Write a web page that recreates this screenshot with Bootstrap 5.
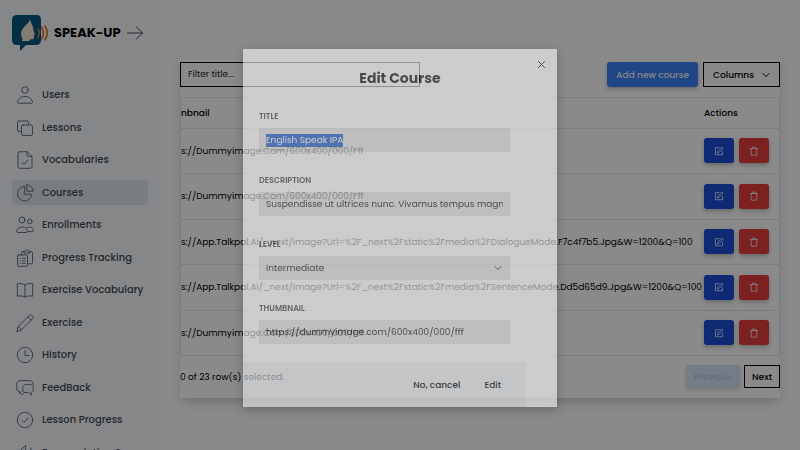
<!DOCTYPE html>
<html lang="en">
<head>
<meta charset="utf-8">
<meta name="viewport" content="width=device-width, initial-scale=1">
<title>Speak-Up – Courses</title>
<link href="https://cdn.jsdelivr.net/npm/bootstrap@5.3.0/dist/css/bootstrap.min.css" rel="stylesheet">
<style>
:root{--bs-body-font-family:Poppins,Inter,"Open Sans",sans-serif}
body{font-size:9px;line-height:16px;color:#000;background:#fff}
svg{flex:none}
.ico{fill:none;stroke:currentColor;stroke-linecap:round;stroke-linejoin:round}
.sidebar{width:160px;background:#f6f9fc;padding:12px}
.brand{height:42px;font-size:13px;font-weight:700;color:#000;gap:6px}
.brand-arrow{color:#4c5158}
.side-list{height:390px;margin-top:25px}
.side-link{height:25px;padding-left:4px;gap:8px;color:#454a52;font-size:10px;font-weight:500}
.side-link.active{background:#e0e6ef}
.side-link .ico{color:#6b727c}
.content-area{padding:50px 20px 0}
.panel{padding:12px 0 10px;box-shadow:0 6px 10px -2px rgba(0,0,0,.2)}
.tool{height:25px;border-radius:0;padding:0 9px;font-size:9px;line-height:16px;font-weight:500}
.tools{gap:5px}
.filter{width:240px;border:1px solid #000;padding:0 7px;font-weight:400}
.filter::placeholder{color:#222;opacity:1}
.btn-main{background:#3b82f6;border:0;border-radius:3px;color:#eff6ff;box-shadow:0 2px 4px rgba(0,0,0,.25)}
.btn-line{border:1px solid #000;color:#000;background:#fff}
.table-frame{margin-top:10px;border:1px solid #e2e8f0;overflow:hidden}
.course-table{height:257px;font-size:9px;white-space:nowrap}
.course-table th,.course-table td{padding:0;vertical-align:middle;border-color:#e2e8f0;color:#000}
.course-table th{height:30px;font-weight:500}
.course-table tr:last-child td{border-bottom:0}
.course-table .act{width:75px}
.row-actions{gap:5px}
.sq{width:30px;height:25px;border:0;border-radius:3px;color:#e8eefc;box-shadow:0 2px 4px rgba(0,0,0,.25)}
.sq-edit{background:#1d4ed8}
.sq-del{background:#e83c3c}
.panel-foot{margin-top:9px}
.pager{height:23px;padding:0 8px;font-size:9px;line-height:16px;font-weight:500;border-radius:0}
.pager.btn-line{padding:0 7px}
.pager:disabled{background:#dbe4fb;color:#b9c9ee;border:0;border-radius:2px;opacity:1;box-shadow:0 2px 4px rgba(0,0,0,.15)}
.modal-backdrop{--bs-backdrop-opacity:.46}
.edit-dialog{max-width:314px;margin:49px auto}
.edit-box{border:0;border-radius:0;opacity:.57;color:#1a1a1a;box-shadow:0 3px 10px rgba(0,0,0,.4)}
.edit-close{top:7px;right:8px;width:16px;height:16px;color:#222}
.edit-title{font-size:14px;line-height:20px;font-weight:700;padding-top:19px;color:#1c1c1c}
.edit-form{padding:23px 47px 18px 16px}
.field-label{font-size:8px;line-height:12px;font-weight:600;margin-bottom:5px;color:#4c4c4c;text-transform:uppercase}
.field{height:24px;border:0;border-radius:0;background-color:#e6e6e6;color:#1a1a1a;font-size:9px;line-height:16px;padding:0 7px;margin-bottom:23px}
.field:focus{background-color:#e6e6e6;box-shadow:none;color:#1a1a1a}
.field::selection{background:#2861d0;color:#fff}
select.field{background-position:right 8px center;background-size:8px 8px}
.field.final{margin-bottom:0}
.edit-foot{background:#f1f3f6;margin-right:31px;height:45px;padding-right:17px;gap:8px}
.edit-foot .btn{border:0;padding:0 8px;font-size:9px;line-height:16px;font-weight:500;color:#000}
</style>
</head>
<body>
<svg class="d-none" xmlns="http://www.w3.org/2000/svg">
<symbol id="i-user" viewBox="0 0 18 18"><circle cx="9" cy="4" r="3.3"/><path d="M2.2 17.2c-.9 0-.9-1-.7-1.8C2.500 12 5.500 10.500 9 10.500s6.500 1.500 7.400 4.900c.3.800.2 1.800-.7 1.800z"/></symbol>
<symbol id="i-copy" viewBox="0 0 18 18"><path d="M5 12.500H3A1.500 1.500 0 0 1 1.500 11V3.500A1.500 1.500 0 0 1 3 2h8a1.500 1.500 0 0 1 1.500 1.500v2"/><rect x="5.500" y="6" width="11" height="10.500" rx="1.500"/></symbol>
<symbol id="i-doc" viewBox="0 0 18 18"><path d="M3.500.7H11L16 5.500v10.300c0 .9-.6 1.500-1.500 1.500h-11C2.600 17.300 2 16.700 2 15.800V2.200C2 1.300 2.600.7 3.500.7zM11 .7v3.500c0 .8.500 1.300 1.300 1.300H16M6.200 11.500l2 2 3.600-4.500"/></symbol>
<symbol id="i-pie" viewBox="0 0 18 18"><path d="M8.500 2.500A7.200 7.200 0 1 0 15.700 11l-1-.8H8.500z"/><path d="M10.800.8v6.400h6.400A6.600 6.600 0 0 0 10.800.8z"/></symbol>
<symbol id="i-group" viewBox="0 0 18 18"><circle cx="6" cy="4" r="3"/><circle cx="13.800" cy="5.500" r="2.300"/><path d="M1.500 16.500c-.8 0-.9-.7-.8-1.500.5-2.700 2.600-4 5.300-4s4.800 1.300 5.300 4c.1.800 0 1.500-.8 1.500zM10.500 11.700c3-1.600 6.300-.4 6.900 2.700.1.700-.1 1.200-.8 1.200h-5"/></symbol>
<symbol id="i-clip" viewBox="0 0 18 18"><rect x="1.500" y="6" width="10" height="11.300" rx="1"/><path d="M5.500 6V3.500c0-.6.400-1 1-1h1.300M14 2.500h1.500c.6 0 1 .4 1 1v10.300c0 .6-.4 1-1 1h-4M7.800 3.700V2.200h1.700a1.500 1.500 0 0 1 2.900 0H14v1.500zM4 9.300h.4M6.300 9.300h3M4 11.800h.4M6.300 11.800h3M4 14.300h.4M6.300 14.300h3"/></symbol>
<symbol id="i-book" viewBox="0 0 18 18"><path d="M9 4C7 2.400 4 2.200 1.300 2.800v12.400C4 14.600 7 14.800 9 16.200c2-1.400 5-1.600 7.700-1V2.800C14 2.200 11 2.400 9 4zM9 4v12"/></symbol>
<symbol id="i-pen" viewBox="0 0 18 18"><path d="M.8 17.200l1.300-4.700L13.500 1.300c1.700-1.500 4.700 1.200 3.200 3.200L5.500 15.900zM12 2.800l3.200 3.200M2.300 12.500l3.200 3.200"/></symbol>
<symbol id="i-clock" viewBox="0 0 18 18"><circle cx="9" cy="9" r="7.700"/><path d="M9 4.500V9.500h4"/></symbol>
<symbol id="i-chat" viewBox="0 0 18 18"><path d="M5.500 12.700l-2 2.300v-2.600C.7 12.200.7 10.500.7 7.500c0-5 0-6 8.300-6s8.200 1 8.200 3.800"/><path d="M9.500 13.500C7 13.400 6.800 12.500 6.800 9.500c0-3.500.5-4 5.200-4s5.200.5 5.200 4c0 3-.2 3.700-2 4v2.800l-2.700-2.700zM8.700 13.500L5.500 16"/></symbol>
<symbol id="i-check" viewBox="0 0 18 18"><circle cx="9" cy="9" r="7.700"/><path d="M6 9.500l2 2L12 7"/></symbol>
<symbol id="i-sound" viewBox="0 0 18 18"><path d="M1.300 6.300h3.200l5-4.800v15l-5-4.800H1.300zM12 6.500q1.500 2.500 0 5M14.300 4q3.200 5 0 10"/></symbol>
<symbol id="i-edit" viewBox="0 0 12 12"><path d="M6 2H1.700v8.500h8.600V6.500M4.300 8l.5-2.200L9.500 1.200l1.400 1.400L6.400 7.400z"/></symbol>
<symbol id="i-trash" viewBox="0 0 12 12"><path d="M1.700 3h8.600M4.200 3V1.300h3.600V3M2.700 3v8h6.600V3"/></symbol>
<symbol id="i-down" viewBox="0 0 8 8"><path d="M1 2.500l3 3 3-3"/></symbol>
</svg>

<div class="d-flex vh-100 overflow-hidden">
  <aside class="sidebar flex-shrink-0">
    <a href="#" class="brand d-flex align-items-center text-decoration-none text-nowrap">
      <svg width="36" height="38" viewBox="0 0 36 38" aria-hidden="true">
        <path fill="#075580" d="M5 1h20q4 0 4 5v20q0 5-5 5H14l-6 6v-6H5q-5 0-5-5V6q0-5 5-5z"/>
        <path fill="#f0e6d2" d="M18 3.500c.3 3-1 4.500-3.500 7C11 14 9 16.500 9 20c0 3 2.500 4 1 7h7.500c.3-1.500 1.200-1.800 2.500-1.700 1.800.1 2-.8 1.800-2.300l.5-1-.4-1 1.100-.7c-.5-1.500-1.700-2.800-1.500-4.300.3-4-3.500-7-3.500-12.500z"/>
        <path fill="none" stroke="#d9742a" stroke-width="1.600" stroke-linecap="round" d="M26 15q2.500 4 0 8M29.500 13q4 6 0 12M33 12q4.500 7 0 14"/>
      </svg>
      <span>SPEAK-UP</span>
      <svg class="ico brand-arrow" width="16" height="14" viewBox="0 0 16 14" aria-hidden="true"><path d="M.5 7h15M9 .7L15.500 7 9 13.300"/></svg>
    </a>
    <ul class="side-list list-unstyled d-flex flex-column mb-0" id="sideList"></ul>
  </aside>

  <main class="content-area flex-grow-1 overflow-hidden">
    <section class="panel">
      <div class="tools d-flex align-items-center">
        <input class="tool filter form-control me-auto" type="text" placeholder="Filter title..." aria-label="Filter title">
        <button type="button" class="btn tool btn-main">Add new course</button>
        <button type="button" class="btn tool btn-line d-flex align-items-center gap-2">Columns <svg class="ico" width="8" height="8"><use href="#i-down"/></svg></button>
      </div>
      <div class="table-frame">
        <table class="table course-table mb-0">
          <thead><tr><th scope="col">nbnail</th><th scope="col" class="act">Actions</th></tr></thead>
          <tbody id="courseRows"></tbody>
        </table>
      </div>
      <div class="panel-foot d-flex align-items-center gap-1">
        <span class="me-auto">0 of 23 row(s) selected.</span>
        <button type="button" class="btn pager" disabled>Previous</button>
        <button type="button" class="btn pager btn-line">Next</button>
      </div>
    </section>
  </main>
</div>

<div class="modal-backdrop show"></div>
<div class="modal d-block" role="dialog" aria-modal="true" aria-labelledby="editTitle">
  <div class="modal-dialog edit-dialog">
    <div class="modal-content edit-box">
      <button type="button" class="btn edit-close position-absolute border-0 p-0 d-flex align-items-center justify-content-center" aria-label="Close"><svg class="ico" width="7" height="7" viewBox="0 0 7 7"><path d="M.5.5l6 6M6.500.5l-6 6"/></svg></button>
      <h2 class="edit-title text-center mb-0" id="editTitle">Edit Course</h2>
      <form class="edit-form">
        <label class="field-label d-block" for="fTitle">Title</label>
        <input class="field form-control" id="fTitle" type="text" value="English Speak IPA">
        <label class="field-label d-block" for="fDesc">Description</label>
        <input class="field form-control" id="fDesc" type="text" value="Suspendisse ut ultrices nunc. Vivamus tempus magna nec">
        <label class="field-label d-block" for="fLevel">Level</label>
        <select class="field form-select" id="fLevel"><option>Intermediate</option></select>
        <label class="field-label d-block" for="fThumb">Thumbnail</label>
        <input class="field final form-control" id="fThumb" type="text" value="https://dummyimage.com/600x400/000/fff">
      </form>
      <div class="edit-foot d-flex align-items-center justify-content-end">
        <button type="button" class="btn">No, cancel</button>
        <button type="button" class="btn">Edit</button>
      </div>
    </div>
  </div>
</div>

<script src="https://cdn.jsdelivr.net/npm/bootstrap@5.3.0/dist/js/bootstrap.bundle.min.js"></script>
<script>
const items = [["user","Users"],["copy","Lessons"],["doc","Vocabularies"],["pie","Courses"],["group","Enrollments"],["clip","Progress Tracking"],["book","Exercise Vocabulary"],["pen","Exercise"],["clock","History"],["chat","FeedBack"],["check","Lesson Progress"],["sound","Pronunciation S"]];
document.getElementById("sideList").innerHTML = items.map(([i, t]) =>
  `<li class="flex-fill d-flex align-items-center"><a href="#" class="side-link d-flex align-items-center w-100 text-decoration-none text-nowrap${t === "Courses" ? " active" : ""}"><svg class="ico" width="18" height="18"><use href="#i-${i}"/></svg>${t}</a></li>`).join("");
const dummy = "s://Dummyimage.Com/600x400/000/Fff";
const media = n => `s://App.Talkpal.Ai/_next/Image?Url=%2F_next%2Fstatic%2Fmedia%2F${n}.Jpg&W=1200&Q=100`;
document.getElementById("courseRows").innerHTML = [dummy, dummy, media("DialogueMode.F7c4f7b5"), media("SentenceMode.Dd5d65d9"), dummy].map(u =>
  `<tr><td>${u.replace(/&/g, "&amp;")}</td><td><div class="row-actions d-flex"><button type="button" class="btn sq sq-edit p-0 d-flex align-items-center justify-content-center" aria-label="Edit"><svg class="ico" width="10" height="10"><use href="#i-edit"/></svg></button><button type="button" class="btn sq sq-del p-0 d-flex align-items-center justify-content-center" aria-label="Delete"><svg class="ico" width="10" height="10"><use href="#i-trash"/></svg></button></div></td></tr>`).join("");
const title = document.getElementById("fTitle");
title.focus();
title.select();
</script>
</body>
</html>
